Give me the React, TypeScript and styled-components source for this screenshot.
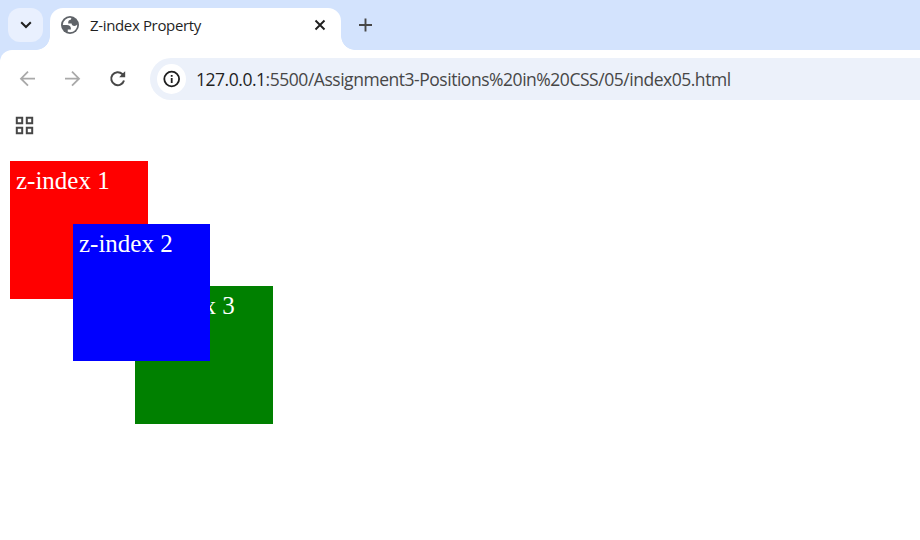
import React from "react";
import styled, { createGlobalStyle, css } from "styled-components";

const Global = createGlobalStyle`
  * { box-sizing: border-box; }
  body { margin: 0; background: #fff; overflow: hidden; }
  svg { display: block; flex: none; }
`;

const Window = styled.div`
  width: 920px;
  height: 540px;
  display: flex;
  flex-direction: column;
  background: #d3e3fd;
  font-family: "Open Sans", "Noto Sans", sans-serif;
  overflow: hidden;
`;

const TabStrip = styled.header`
  display: flex;
  height: 50px;
  padding-left: 8px;
  flex: none;
`;

const TabSearch = styled.button`
  width: 35px;
  height: 34px;
  margin: 8px 7px 0 0;
  padding: 0;
  border: 0;
  border-radius: 12px;
  background: #e9f0fe;
  display: grid;
  place-items: center;
`;

const Tab = styled.div`
  position: relative;
  display: flex;
  align-items: center;
  width: 291px;
  height: 42px;
  margin-top: 8px;
  padding: 0 14px 8px 11px;
  border-radius: 13px 13px 0 0;
  background: #fff;
  &::before,
  &::after {
    content: "";
    position: absolute;
    bottom: 0;
    width: 14px;
    height: 14px;
  }
  &::before {
    left: -14px;
    background: radial-gradient(circle at 0 0, transparent 13.5px, #fff 14.2px);
  }
  &::after {
    right: -14px;
    background: radial-gradient(circle at 100% 0, transparent 13.5px, #fff 14.2px);
  }
`;

const TabTitle = styled.span`
  flex: 1;
  margin-left: 11px;
  font-size: 15px;
  line-height: 20px;
  letter-spacing: -0.35px;
  color: #1f1f1f;
  white-space: nowrap;
`;

const NewTab = styled.button`
  width: 34px;
  height: 34px;
  margin: 8px 0 0 7px;
  padding: 0;
  border: 0;
  background: none;
  display: grid;
  place-items: center;
`;

const Toolbar = styled.nav`
  display: flex;
  align-items: center;
  flex: none;
  height: 57px;
  padding: 1px 0 0 16px;
  border-radius: 12px 0 0 0;
  background: #fff;
`;

const NavButton = styled.button<{ $muted?: boolean }>`
  width: 45px;
  height: 40px;
  padding: 0;
  border: 0;
  background: none;
  color: ${(p) => (p.$muted ? "#a9a9a9" : "#474747")};
`;

const AddressBar = styled.div`
  display: flex;
  align-items: center;
  flex: 1;
  height: 42px;
  margin-left: -1px;
  padding-left: 7px;
  border-radius: 21px 0 0 21px;
  background: #ecf1fa;
`;

const SiteInfo = styled.span`
  width: 29px;
  height: 30px;
  border-radius: 50%;
  background: #fff;
  display: grid;
  place-items: center;
`;

const Url = styled.span`
  margin-left: 10px;
  font-size: 17.5px;
  line-height: 24px;
  letter-spacing: -0.47px;
  color: #474747;
  white-space: nowrap;
`;

const Host = styled.span`
  color: #1f1f1f;
`;

const Bookmarks = styled.div`
  flex: none;
  height: 44px;
  padding: 9px 0 0 15px;
  background: #fff;
`;

const Page = styled.main`
  position: relative;
  flex: 1;
  background: #fff;
`;

const variants = {
  red: css`left: 10px; top: 10px; z-index: 1; background: red;`,
  blue: css`left: 73px; top: 73px; z-index: 3; width: 137px; height: 137px; background: blue;`,
  green: css`left: 135px; top: 135px; z-index: 2; background: green;`,
};

const Box = styled.div<{ $kind: keyof typeof variants }>`
  position: absolute;
  width: 138px;
  height: 138px;
  padding: 6px;
  color: #fff;
  font: 25px/28px "Liberation Serif", "Times New Roman", serif;
  ${(p) => variants[p.$kind]}
`;

export default function App() {
  return (
    <>
      <Global />
      <Window>
        <TabStrip>
          <TabSearch aria-label="Search tabs">
            <svg width="12" height="8" viewBox="0 0 12 8" fill="none" stroke="#1f1f1f" strokeWidth="2">
              <path d="M1.2 1.2 6 6l4.8-4.8" />
            </svg>
          </TabSearch>
          <Tab>
            <svg width="18" height="18" viewBox="2 2 20 20">
              <circle cx="12" cy="12" r="10" fill="#5f6368" />
              <path
                d="M4 12h4.400c3.407.022 4.922 1.730 4.543 5.127H9.488v2.470a8.004 8.004 0 0 0 10.498-8.083C19.327 12.504 18.332 13 17 13c-2.137 0-3.206-.916-3.206-2.750h-3.748c-.274-2.728.683-4.092 2.870-4.092 0-.975.327-1.597.811-1.970A8.004 8.004 0 0 0 4 12z"
                fill="#fff"
              />
            </svg>
            <TabTitle>Z-index Property</TabTitle>
            <svg width="14" height="14" viewBox="0 0 14 14" fill="none" stroke="#1f1f1f" strokeWidth="1.9">
              <path d="m2.500 2.500 9 9M11.500 2.500l-9 9" />
            </svg>
          </Tab>
          <NewTab aria-label="New tab">
            <svg width="14" height="14" viewBox="0 0 14 14" fill="none" stroke="#474747" strokeWidth="1.9">
              <path d="M7.500 .5v13M1 7h13" />
            </svg>
          </NewTab>
        </TabStrip>
        <Toolbar>
          <NavButton $muted aria-label="Back">
            <svg width="23" height="40" viewBox="0 0 23 40" fill="none" stroke="currentColor" strokeWidth="1.8">
              <path d="M19 19.700H5.500M12 12.700l-7 7 7 7" />
            </svg>
          </NavButton>
          <NavButton $muted aria-label="Forward">
            <svg width="23" height="40" viewBox="0 0 23 40" fill="none" stroke="currentColor" strokeWidth="1.8">
              <path d="M4 19.700h13.500M11 12.700l7 7-7 7" />
            </svg>
          </NavButton>
          <NavButton aria-label="Reload">
            <svg width="23" height="40" viewBox="0 0 23 40" fill="none" stroke="currentColor" strokeWidth="2">
              <path d="M18 21.500A6.500 6.500 0 1 1 16.300 15l2 2" />
              <path d="M19.200 12.200v6h-6l2-2.100 2-2z" fill="currentColor" stroke="none" />
            </svg>
          </NavButton>
          <AddressBar>
            <SiteInfo>
              <svg width="18" height="18" viewBox="0 0 18 18" fill="none" stroke="#1f1f1f" strokeWidth="1.8">
                <circle cx="8.700" cy="9" r="7.400" />
                <path d="M8.700 8v5M8.700 5v1.800" />
              </svg>
            </SiteInfo>
            <Url>
              <Host>127.0.0.1</Host>:5500/Assignment3-Positions%20in%20CSS/05/index05.html
            </Url>
          </AddressBar>
        </Toolbar>
        <Bookmarks>
          <svg width="20" height="20" viewBox="0 0 20 20" fill="none" stroke="#474747" strokeWidth="2">
            <path d="M1.800 1.800h5.400v5.400H1.800zM11.800 1.800h5.400v5.400h-5.400zM1.800 11.800h5.400v5.400H1.800zM11.800 11.800h5.400v5.400h-5.400z" />
          </svg>
        </Bookmarks>
        <Page>
          <Box $kind="red">z-index 1</Box>
          <Box $kind="blue">z-index 2</Box>
          <Box $kind="green">z-index 3</Box>
        </Page>
      </Window>
    </>
  );
}
